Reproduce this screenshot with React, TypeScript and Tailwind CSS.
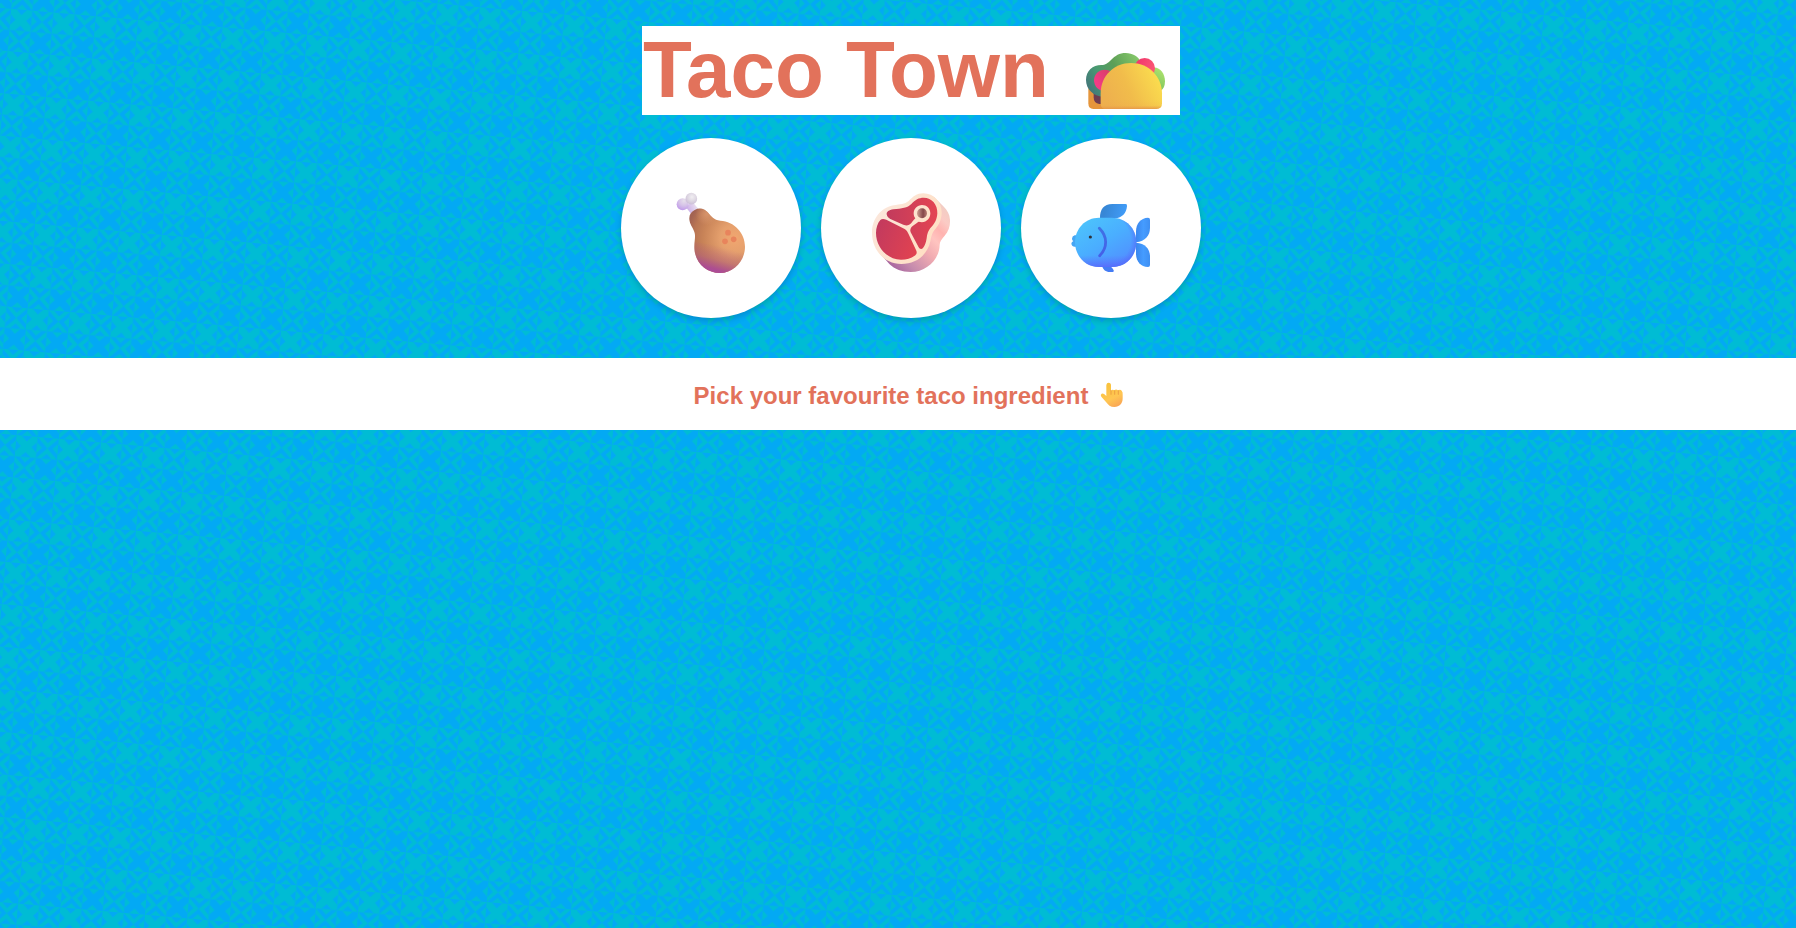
import React from "react";

const TEAL = "#00bcd4";
const BLUE = "#03a9f4";

function Notches({ x, y, fills }: { x: number; y: number; fills: [string, string, string, string] }) {
  return (
    <g transform={`translate(${x} ${y})`}>
      <path d="M1 0H3L2 1Z" fill={fills[0]} />
      <path d="M4 1V3L3 2Z" fill={fills[1]} />
      <path d="M1 4H3L2 3Z" fill={fills[2]} />
      <path d="M0 1V3L1 2Z" fill={fills[3]} />
    </g>
  );
}

function QuiltBackground() {
  return (
    <svg className="absolute inset-0 h-full w-full" aria-hidden="true">
      <defs>
        <pattern
          id="quilt"
          width="8"
          height="8"
          patternUnits="userSpaceOnUse"
          patternTransform="translate(20.9 20.3) rotate(5) scale(5.3025) translate(-2 -2)"
        >
          <rect width="8" height="8" fill={BLUE} />
          <rect width="4" height="4" fill={TEAL} />
          <path d="M4 4L6 2L8 4ZM4 0L6 2L8 0ZM0 4L2 6L0 8ZM4 4L2 6L4 8Z" fill={TEAL} />
          <Notches x={0} y={0} fills={[BLUE, BLUE, BLUE, BLUE]} />
          <Notches x={4} y={4} fills={[TEAL, TEAL, TEAL, TEAL]} />
          <Notches x={4} y={0} fills={[BLUE, TEAL, BLUE, TEAL]} />
          <Notches x={0} y={4} fills={[TEAL, BLUE, TEAL, BLUE]} />
        </pattern>
      </defs>
      <rect width="100%" height="100%" fill="url(#quilt)" />
    </svg>
  );
}

function Taco() {
  return (
    <svg className="h-[89px] w-[110px] shrink-0" viewBox="0 -42 330 267" role="img" aria-label="taco">
      <defs>
        <linearGradient id="t-lettuce" x1="50" y1="140" x2="200" y2="50" gradientUnits="userSpaceOnUse">
          <stop offset="0" stopColor="#43767a" />
          <stop offset=".3" stopColor="#489a72" />
          <stop offset=".6" stopColor="#5d9f57" />
          <stop offset="1" stopColor="#84c669" />
        </linearGradient>
        <linearGradient id="t-leaf" x1="255" y1="145" x2="285" y2="100" gradientUnits="userSpaceOnUse">
          <stop offset="0" stopColor="#7cc45e" />
          <stop offset="1" stopColor="#a9e06c" />
        </linearGradient>
        <linearGradient id="t-shell" x1="110" y1="180" x2="275" y2="100" gradientUnits="userSpaceOnUse">
          <stop offset="0" stopColor="#eeb04e" />
          <stop offset=".4" stopColor="#f1bc4b" />
          <stop offset="1" stopColor="#fce14f" />
        </linearGradient>
        <linearGradient id="t-rim" x1="0" y1="180" x2="0" y2="207" gradientUnits="userSpaceOnUse">
          <stop offset="0" stopColor="#e99f48" stopOpacity="0" />
          <stop offset=".6" stopColor="#e99f48" stopOpacity=".1" />
          <stop offset="1" stopColor="#e69449" stopOpacity=".85" />
        </linearGradient>
        <linearGradient id="t-tom1" x1="75" y1="120" x2="115" y2="95" gradientUnits="userSpaceOnUse">
          <stop offset="0" stopColor="#f43a86" />
          <stop offset="1" stopColor="#d83f69" />
        </linearGradient>
        <linearGradient id="t-tom2" x1="200" y1="60" x2="250" y2="80" gradientUnits="userSpaceOnUse">
          <stop offset="0" stopColor="#f0366d" />
          <stop offset="1" stopColor="#fb5473" />
        </linearGradient>
      </defs>
      <path d="M55 145H110V207H70Q55 207 55 190Z" fill="#e5953b" />
      <path d="M71 155H110V192H88Q71 190 71 172Z" fill="#6f3c50" />
      <path d="M240 85C266 74 285 98 285 124C285 138 280 148 272 152L235 130Z" fill="url(#t-leaf)" />
      <path
        d="M100 171C70 168 48 148 48 120C48 92 68 75 94 75C107 75 112 70 123 60C136 47 148 39 167 39C188 39 206 50 212 66L175 130Z"
        fill="url(#t-lettuce)"
      />
      <circle cx="104" cy="121" r="32" fill="url(#t-tom1)" />
      <circle cx="224" cy="85" r="31" fill="url(#t-tom2)" />
      <path
        d="M92 160C92 108 132 69 183 69C235 69 276 109 276 160V190Q276 207 259 207H109Q92 207 92 190Z"
        fill="url(#t-shell)"
      />
      <path d="M92 175H276V190Q276 207 259 207H109Q92 207 92 190Z" fill="url(#t-rim)" />
    </svg>
  );
}

function Drumstick() {
  return (
    <svg className="size-[90px]" viewBox="168 159 270 270" role="img" aria-label="chicken">
      <defs>
        <radialGradient id="c-knob1" cx="246" cy="201" r="22" gradientUnits="userSpaceOnUse">
          <stop offset="0" stopColor="#f1eef2" />
          <stop offset=".5" stopColor="#e0dae4" />
          <stop offset="1" stopColor="#cdc0d8" />
        </radialGradient>
        <radialGradient id="c-knob2" cx="222" cy="212" r="30" gradientUnits="userSpaceOnUse">
          <stop offset="0" stopColor="#e6dfea" />
          <stop offset=".5" stopColor="#d6c3e8" />
          <stop offset="1" stopColor="#bf98ea" />
        </radialGradient>
        <linearGradient id="c-bone" x1="232" y1="240" x2="262" y2="225" gradientUnits="userSpaceOnUse">
          <stop offset="0" stopColor="#cdb0e8" />
          <stop offset="1" stopColor="#ece4f1" />
        </linearGradient>
        <radialGradient id="c-meat" cx="375" cy="325" r="145" gradientUnits="userSpaceOnUse">
          <stop offset="0" stopColor="#f1a670" />
          <stop offset=".3" stopColor="#e5a06d" />
          <stop offset=".65" stopColor="#c98458" />
          <stop offset=".85" stopColor="#b97553" />
          <stop offset="1" stopColor="#a36353" />
        </radialGradient>
        <linearGradient id="c-base" x1="340" y1="352" x2="318" y2="430" gradientUnits="userSpaceOnUse">
          <stop offset="0" stopColor="#b0508a" stopOpacity="0" />
          <stop offset=".5" stopColor="#b0588a" stopOpacity=".4" />
          <stop offset=".85" stopColor="#ab4a96" stopOpacity=".92" />
          <stop offset="1" stopColor="#ab4a9b" />
        </linearGradient>
        <radialGradient id="c-light" cx="290" cy="252" r="34" gradientUnits="userSpaceOnUse">
          <stop offset="0" stopColor="#dd9a70" stopOpacity=".8" />
          <stop offset="1" stopColor="#dd9a70" stopOpacity="0" />
        </radialGradient>
      </defs>
      <path d="M228 232L246 214L270 242L248 258Z" fill="url(#c-bone)" />
      <circle cx="218" cy="223" r="18" fill="url(#c-knob2)" />
      <circle cx="244" cy="206" r="17.500" fill="url(#c-knob1)" />
      <path
        d="M239 274C235 257 242 246 254 240C269 232 283 236 293 247C304 259 311 271 331 272C373 274 405 309 405 350C405 393 371 429 330 429C287 429 253 396 253 351C253 333 257 321 254 309C250 294 242 288 239 274Z"
        fill="url(#c-meat)"
      />
      <path
        d="M239 274C235 257 242 246 254 240C269 232 283 236 293 247C304 259 311 271 331 272C373 274 405 309 405 350C405 393 371 429 330 429C287 429 253 396 253 351C253 333 257 321 254 309C250 294 242 288 239 274Z"
        fill="url(#c-light)"
      />
      <path
        d="M254 335C300 345 360 345 405 345V350C405 393 371 429 330 429C287 429 253 396 253 351Z"
        fill="url(#c-base)"
      />
      <circle cx="354" cy="308" r="8.500" fill="#e8845c" />
      <circle cx="371" cy="328" r="8.500" fill="#e8845c" />
      <circle cx="345" cy="334" r="8.500" fill="#e8845c" />
    </svg>
  );
}

function Steak() {
  return (
    <svg className="size-[90px]" viewBox="168 159 270 270" role="img" aria-label="beef">
      <defs>
        <linearGradient id="s-side" x1="235" y1="410" x2="415" y2="235" gradientUnits="userSpaceOnUse">
          <stop offset="0" stopColor="#a4609d" />
          <stop offset=".2" stopColor="#c68cad" />
          <stop offset=".45" stopColor="#f1abb1" />
          <stop offset=".62" stopColor="#ffc4c0" />
          <stop offset=".74" stopColor="#ffb3b0" />
          <stop offset=".86" stopColor="#fbcbc5" />
          <stop offset="1" stopColor="#f0cdc3" />
        </linearGradient>
        <linearGradient id="s-fat" x1="200" y1="230" x2="380" y2="330" gradientUnits="userSpaceOnUse">
          <stop offset="0" stopColor="#fbe7dc" />
          <stop offset="1" stopColor="#ffdfc3" />
        </linearGradient>
        <linearGradient id="s-meat" x1="200" y1="290" x2="340" y2="340" gradientUnits="userSpaceOnUse">
          <stop offset="0" stopColor="#c33a5e" />
          <stop offset="1" stopColor="#e4434f" />
        </linearGradient>
        <linearGradient id="s-meat2" x1="230" y1="245" x2="380" y2="245" gradientUnits="userSpaceOnUse">
          <stop offset="0" stopColor="#c23b5d" />
          <stop offset="1" stopColor="#e34452" />
        </linearGradient>
        <linearGradient id="s-hole" x1="322" y1="0" x2="351" y2="0" gradientUnits="userSpaceOnUse">
          <stop offset="0" stopColor="#cb998e" />
          <stop offset=".6" stopColor="#85474a" />
          <stop offset="1" stopColor="#b97d74" />
        </linearGradient>
      </defs>
      <path
        d="M210 370L238 402C254 418 276 426 302 426C350 426 388 388 389 345C389 334 396 326 404 317C416 303 421 289 420 269C419 253 412 241 400 229L372 201L330 230Z"
        fill="url(#s-side)"
      />
      <path
        d="M186 308C186 266 213 233 251 226C270 222 284 223 296 213C309 200 320 190 340 190C372 190 396 217 395 250C394 270 388 283 376 297C365 309 364 320 361 334C353 374 319 402 274 402C224 402 186 361 186 308Z"
        fill="url(#s-fat)"
      />
      <path
        d="M211 270C215 266 221 266 229 269L284 297C290 301 293 306 296 313L318 360C322 368 320 373 314 377C303 385 290 389 273 389C232 389 198 352 198 309C198 294 203 279 211 270Z"
        fill="url(#s-meat)"
      />
      <path
        d="M230 253C229 245 237 240 250 238C276 235 292 234 304 222C316 209 326 203 341 203C366 203 383 224 382 250C381 269 374 281 364 291C354 302 352 311 350 325C348 338 345 347 339 354C335 359 329 358 326 352L302 307C299 299 302 292 309 287C317 282 321 278 326 275C346 281 361 268 361 250C361 235 350 225 336 225C322 225 311 236 311 250C311 257 313 262 316 265C310 271 306 278 300 283C295 287 288 287 280 284L241 267C235 264 231 260 230 253Z"
        fill="url(#s-meat2)"
      />
      <circle cx="336" cy="250" r="15" fill="url(#s-hole)" />
    </svg>
  );
}

function Fish() {
  return (
    <svg className="size-[90px]" viewBox="168 159 270 270" role="img" aria-label="fish">
      <defs>
        <linearGradient id="f-body" x1="235" y1="270" x2="330" y2="420" gradientUnits="userSpaceOnUse">
          <stop offset="0" stopColor="#4cc1fc" />
          <stop offset=".45" stopColor="#4aaeff" />
          <stop offset=".8" stopColor="#4f98ff" />
          <stop offset="1" stopColor="#5583ff" />
        </linearGradient>
        <linearGradient id="f-shade" x1="0" y1="376" x2="0" y2="411" gradientUnits="userSpaceOnUse">
          <stop offset="0" stopColor="#5b70ff" stopOpacity="0" />
          <stop offset="1" stopColor="#5868fb" stopOpacity=".85" />
        </linearGradient>
        <radialGradient id="f-edge" cx="290" cy="330" r="94" gradientUnits="userSpaceOnUse">
          <stop offset=".76" stopColor="#5573ff" stopOpacity="0" />
          <stop offset="1" stopColor="#526bf5" stopOpacity=".8" />
        </radialGradient>
        <linearGradient id="f-fin" x1="285" y1="240" x2="345" y2="255" gradientUnits="userSpaceOnUse">
          <stop offset="0" stopColor="#3787d6" />
          <stop offset="1" stopColor="#419cf8" />
        </linearGradient>
        <linearGradient id="f-tail" x1="380" y1="290" x2="420" y2="290" gradientUnits="userSpaceOnUse">
          <stop offset="0" stopColor="#3b88ef" />
          <stop offset=".5" stopColor="#459cff" />
          <stop offset="1" stopColor="#3f8ff2" />
        </linearGradient>
        <linearGradient id="f-gill" x1="0" y1="292" x2="0" y2="380" gradientUnits="userSpaceOnUse">
          <stop offset="0" stopColor="#3f72e4" />
          <stop offset="1" stopColor="#455fe9" />
        </linearGradient>
      </defs>
      <path d="M270 264C270 238 281 222 307 222H347Q352 222 351 229C349 249 337 264 315 265Z" fill="url(#f-fin)" />
      <path d="M378 337V304C378 281 392 264 414 263Q420 263 420 269V293C420 316 406 334 378 337Z" fill="url(#f-tail)" />
      <path d="M378 338C406 340 420 357 420 380V405Q420 411 414 411C392 410 378 394 378 371Z" fill="url(#f-tail)" />
      <path d="M276 408C280 420 288 427 302 426H309Q313 425 311 421C308 414 303 410 298 407Z" fill="#447cf4" />
      <path d="M201 316H194Q186 318 186 326Q186 331 190 333Q184 336 184 341Q186 350 194 350H202Z" fill="#46a6f4" />
      <path d="M267 263H305C349 263 379 296 379 337C379 379 348 411 305 411H267C226 411 195 378 195 337C195 296 226 263 267 263Z" fill="url(#f-body)" />
      <path d="M267 263H305C349 263 379 296 379 337C379 379 348 411 305 411H267C226 411 195 378 195 337C195 296 226 263 267 263Z" fill="url(#f-shade)" />
      <path d="M300 263H305C349 263 379 296 379 337C379 379 348 411 305 411H300Z" fill="url(#f-edge)" />
      <path d="M268 295C293 320 293 352 269 377" fill="none" stroke="url(#f-gill)" strokeWidth="8.500" strokeLinecap="round" />
      <circle cx="241" cy="321" r="4.800" fill="#2f3138" />
    </svg>
  );
}

function PointingHand() {
  return (
    <svg className="h-[72px] w-[33px] shrink-0" viewBox="1245 24 99 216" role="img" aria-label="pointing up">
      <defs>
        <linearGradient id="h-skin" x1="1275" y1="105" x2="1310" y2="172" gradientUnits="userSpaceOnUse">
          <stop offset="0" stopColor="#f9c23c" />
          <stop offset=".6" stopColor="#ffc653" />
          <stop offset="1" stopColor="#f9a455" />
        </linearGradient>
      </defs>
      <path
        d="M1279 105Q1280 98 1286 98Q1293 98 1293 106V122Q1297 117 1303 121Q1308 116 1314 121Q1321 117 1325 122Q1329 126 1328 134V145C1328 161 1319 171 1303 171C1291 171 1285 165 1278 156L1264 140Q1260 134 1265 131Q1270 129 1279 138Z"
        fill="url(#h-skin)"
      />
      <path d="M1293 121V133M1304 122V133M1315 122V133" stroke="#e48c3d" strokeWidth="2" strokeLinecap="round" fill="none" />
    </svg>
  );
}

function IngredientButton({ children }: { children: React.ReactNode }) {
  return (
    <button
      type="button"
      className="flex size-[180px] items-center justify-center rounded-full bg-white shadow-[0_3px_6px_rgba(0,0,0,0.16)]"
    >
      {children}
    </button>
  );
}

export default function App() {
  return (
    <div className="relative h-screen overflow-hidden bg-[#03a9f4] font-['Liberation_Sans',Arial,sans-serif] font-bold text-[#e2725b]">
      <QuiltBackground />
      <main className="relative flex w-[1822px] flex-col items-center pt-[26px]">
        <h1 className="flex h-[89px] w-[538px] justify-between bg-white pl-px text-[80px] leading-[87px] whitespace-nowrap">
          <span>Taco Town</span>
          <Taco />
        </h1>
        <div className="mt-[23px] flex gap-5">
          <IngredientButton>
            <Drumstick />
          </IngredientButton>
          <IngredientButton>
            <Steak />
          </IngredientButton>
          <IngredientButton>
            <Fish />
          </IngredientButton>
        </div>
        <div className="mt-10 flex h-[72px] w-full justify-center gap-[7px] bg-white text-2xl leading-[75px]">
          <p>Pick your favourite taco ingredient</p>
          <PointingHand />
        </div>
      </main>
    </div>
  );
}
